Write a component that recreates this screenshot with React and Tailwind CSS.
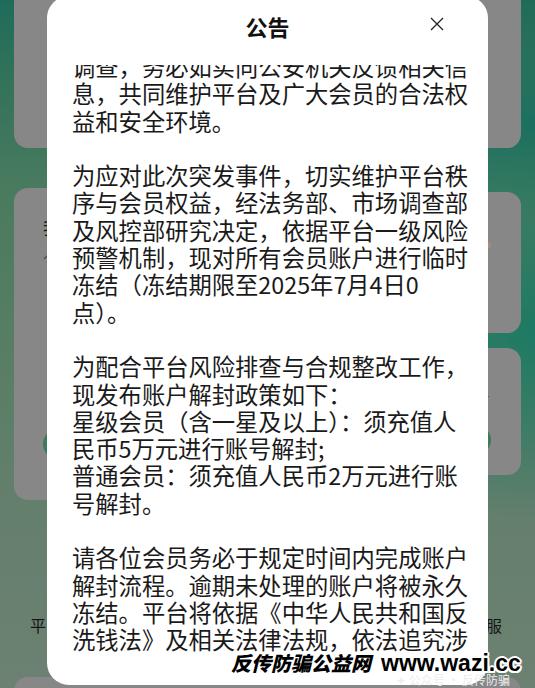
import React from "react";

const lines = [
  "调查，务必如实向公安机关反馈相关信",
  "息，共同维护平台及广大会员的合法权",
  "益和安全环境。",
  "",
  "为应对此次突发事件，切实维护平台秩",
  "序与会员权益，经法务部、市场调查部",
  "及风控部研究决定，依据平台一级风险",
  "预警机制，现对所有会员账户进行临时",
  "冻结（冻结期限至2025年7月4日0",
  "点）。",
  "",
  "为配合平台风险排查与合规整改工作，",
  "现发布账户解封政策如下：",
  "星级会员（含一星及以上）：须充值人",
  "民币5万元进行账号解封;",
  "普通会员：须充值人民币2万元进行账",
  "号解封。",
  "",
  "请各位会员务必于规定时间内完成账户",
  "解封流程。逾期未处理的账户将被永久",
  "冻结。平台将依据《中华人民共和国反",
  "洗钱法》及相关法律法规，依法追究涉",
  "事人员的法律责任。",
];

function Background() {
  return (
    <div className="flex flex-col px-[14px]">
      {/* top cards */}
      <div className="-mt-[20px] flex gap-[10px] items-start">
        <div className="flex w-[248px] flex-col">
          <div className="h-[168px] rounded-[14px] bg-[#878787]" />
          <div className="relative mt-[40px] h-[312px] rounded-[14px] bg-[#878787] pl-[29px] pt-[28px]">
            <p className="text-[16px] leading-[22px] text-[#151515]">我的资产</p>
            <p className="mt-[6px] text-[13px] leading-[18px] text-[#3a3a3a]">人民币账户余额</p>
            <div className="absolute left-[29px] top-[240px] h-[32px] w-[32px] rounded-full bg-[#3f7a5a]" />
          </div>
        </div>
        <div className="flex w-[250px] flex-col">
          <div className="h-[168px] rounded-[14px] bg-[#878787]" />
          <div className="relative mt-[44px] h-[141px] rounded-[14px] bg-[#878787]">
            <div className="absolute right-[30px] top-[50px] h-[6px] w-[6px] rounded-full bg-[#b08a78]" />
          </div>
          <div className="relative mt-[15px] h-[127px] rounded-[14px] bg-[#878787] pr-[32px] pt-[30px] text-right">
            <p className="text-[16px] leading-[22px] text-[#151515]">充值</p>
            <div className="absolute right-[30px] top-[78px] h-[28px] w-[28px] rounded-full bg-[#3f7a5a]" />
          </div>
        </div>
      </div>

      {/* shortcut labels */}
      <div className="mt-[114px] flex justify-between pl-[16px] pr-[19px] text-[16px] leading-[22px] text-[#151515]">
        <span>平台规则</span>
        <span>帮助中心</span>
        <span>关于我们</span>
        <span>在线客服</span>
      </div>

      <div className="mt-[41px] h-[100px] rounded-[14px] bg-[#878787]" />
    </div>
  );
}

export default function App() {
  return (
    <div className="relative h-[688px] w-[535px] overflow-hidden bg-[radial-gradient(ellipse_45%_28%_at_100%_48%,#1d7a64_0%,rgba(29,122,100,0)_100%),radial-gradient(ellipse_40%_14%_at_100%_18%,#1b7060_0%,rgba(27,112,96,0)_100%),linear-gradient(180deg,#1f6b5a_0%,#2f7259_10%,#4a7b5f_28%,#577e64_50%,#657f6d_75%,#6c8171_100%)] font-['Noto_Sans_CJK_SC',sans-serif]">
      <Background />

      {/* dialog */}
      <div className="absolute left-[47px] top-[-4px] flex h-[689px] w-[441px] flex-col rounded-[22px] bg-white pb-[32px]">
        <div className="relative flex h-[69px] shrink-0 items-center justify-center pb-[9px]">
          <h2 className="text-[22px] font-bold leading-[30px] text-[#111111]">公告</h2>
          <button className="absolute right-[44px] top-[21px] h-[14px] w-[14px]">
            <svg viewBox="0 0 14 14" className="h-[14px] w-[14px]" fill="none" stroke="#222" strokeWidth="1.3">
              <path d="M1 1 13 13M13 1 1 13" />
            </svg>
          </button>
        </div>
        <div className="flex-1 overflow-hidden">
          <div className="-mt-[12px] pl-[25px] text-[23.3px] leading-[27.3px] text-[#1a1a1a]">
            {lines.map((l, i) => (
              <div key={i} className="h-[27.3px] whitespace-nowrap">
                {l}
              </div>
            ))}
          </div>
        </div>
      </div>

      {/* watermark */}
      <div className="absolute left-[396px] top-[672px] text-[12px] leading-[16px] text-[#eeeeee]">
        ✦ 公众号 · 反传防骗
      </div>
      <div className="absolute left-[231px] top-[651px] flex h-[24px] items-baseline whitespace-nowrap leading-[24px] text-black [text-shadow:2px_0_0_#fff,-2px_0_0_#fff,0_2px_0_#fff,0_-2px_0_#fff,1.5px_1.5px_0_#fff,-1.5px_-1.5px_0_#fff,1.5px_-1.5px_0_#fff,-1.5px_1.5px_0_#fff]">
        <span className="text-[20px] font-black italic">反传防骗公益网</span>
        <span className="ml-[10px] font-['Liberation_Sans',sans-serif] text-[23px] font-bold">www.wazi.cc</span>
      </div>
    </div>
  );
}
